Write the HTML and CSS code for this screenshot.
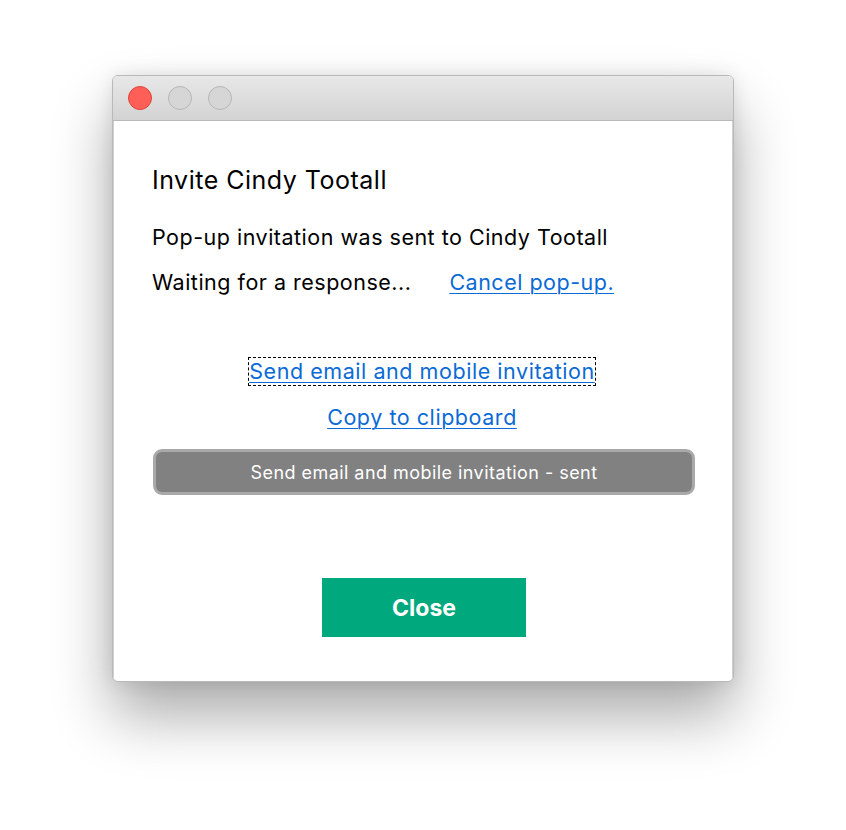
FILE: index.html
```html
<!DOCTYPE html>
<html>
<head>
<meta charset="utf-8">
<link rel="stylesheet" href="styles.css">
</head>
<body>
<div class="stage">
  <div class="window">
    <div class="titlebar">
      <span class="light red"></span>
      <span class="light"></span>
      <span class="light"></span>
    </div>
    <div class="content">
      <h1 class="title">Invite Cindy Tootall</h1>
      <p class="line first">Pop-up invitation was sent to Cindy Tootall</p>
      <p class="line wait"><span>Waiting for a response...</span><a class="link" href="#">Cancel pop-up.</a></p>
      <div class="actions">
        <a class="link focus" href="#">Send email and mobile invitation</a>
        <a class="link" href="#">Copy to clipboard</a>
      </div>
      <div class="sent">Send email and mobile invitation - sent</div>
      <div class="footer">
        <button class="close">Close</button>
      </div>
    </div>
  </div>
</div>
</body>
</html>
```
FILE: styles.css
```css
html, body {
  margin: 0;
  padding: 0;
  background: #ffffff;
}
body {
  font-family: Inter, "Liberation Sans", sans-serif;
  width: 846px;
  height: 830px;
  overflow: hidden;
}
.stage {
  padding: 75px 0 0 112px;
}
.window {
  width: 622px;
  height: 607px;
  box-sizing: border-box;
  border: 1px solid #b9b9b9;
  border-radius: 6px;
  background: #fff;
  overflow: hidden;
  box-shadow: 0 34px 60px rgba(0,0,0,0.33), 0 0 18px rgba(0,0,0,0.10);
  display: flex;
  flex-direction: column;
}
.titlebar {
  height: 44px;
  flex: none;
  background: linear-gradient(#e8e8e8, #d3d3d3);
  border-bottom: 1px solid #b9b9b9;
  display: flex;
  align-items: center;
  gap: 16px;
  padding-left: 15px;
}
.light {
  width: 22px;
  height: 22px;
  border-radius: 50%;
  border: 1px solid #b6b6b6;
  background: #d6d6d6;
}
.light.red {
  background: #ff5f57;
  border-color: #e0443e;
}
.content {
  flex: 1;
  padding: 0 40px 0 38px;
  border-left: 1px solid #d0d0d0;
  border-right: 1px solid #d0d0d0;
  display: flex;
  flex-direction: column;
}
.title {
  margin: 44px 0 0 0;
  font-size: 25px;
  letter-spacing: 0.5px;
  font-weight: 400;
  line-height: 30px;
  color: #000;
}
.line {
  margin: 0;
  font-size: 21.5px;
  letter-spacing: 0.5px;
  line-height: 26px;
  color: #000;
}
.first {
  margin-top: 29px;
}
.wait {
  margin-top: 19px;
  display: flex;
  gap: 38px;
}
.link {
  color: #0a6ad6;
  text-decoration: underline;
  text-underline-offset: 3px;
  text-decoration-thickness: 1px;
}
.actions {
  margin-top: 63px;
  display: flex;
  flex-direction: column;
  align-items: center;
  gap: 19px;
  font-size: 21.5px;
  letter-spacing: 0.55px;
  line-height: 27px;
}
.focus {
  outline: 1px dashed #000;
  outline-offset: 0;
}
.sent {
  margin-top: 18px;
  height: 46px;
  box-sizing: border-box;
  border: 3px solid #a9a9a9;
  border-radius: 9px;
  background: #818181;
  color: #fff;
  font-size: 18px;
  letter-spacing: 0.45px;
  display: flex;
  align-items: center;
  justify-content: center;
  width: 542px;
  margin-left: 1px;
}
.footer {
  margin-top: 83px;
  display: flex;
  justify-content: center;
}
.close {
  width: 204px;
  height: 59px;
  background: #00a87e;
  color: #fff;
  border: none;
  font-family: Inter, "Liberation Sans", sans-serif;
  font-weight: 700;
  font-size: 23px;
  padding: 0;
  margin-left: 4px;
}
```
